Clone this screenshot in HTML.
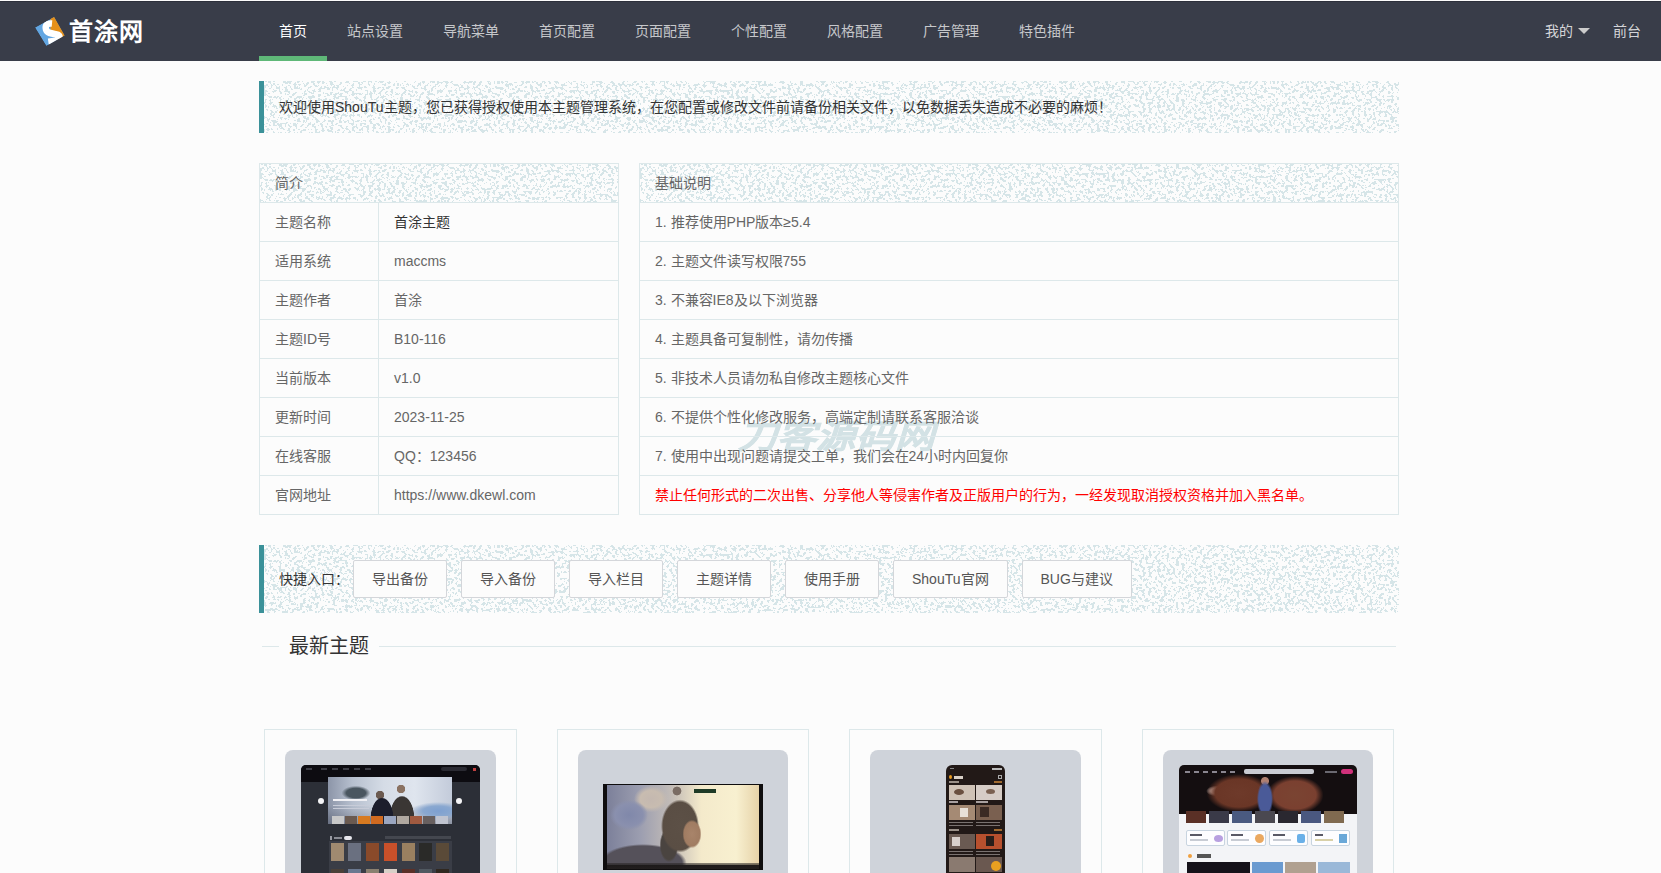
<!DOCTYPE html>
<html lang="zh-CN">
<head>
<meta charset="utf-8">
<title>首涂主题管理</title>
<style>
*{margin:0;padding:0;box-sizing:border-box;}
html,body{width:1661px;height:873px;overflow:hidden;}
body{background:#fcfcfc;font-family:"Liberation Sans",sans-serif;font-size:14px;color:#666;position:relative;}
.abs{position:absolute;}
/* header */
.hd{position:absolute;left:0;top:1px;width:1661px;height:60px;background:#393d49;border-top:1px solid #2d303b;}
.logo{position:absolute;}
.logotxt{position:absolute;left:69px;top:13px;font-family:"Liberation Serif",serif;font-weight:bold;color:#fff;font-size:24px;line-height:34px;letter-spacing:1px;}
.nav{position:absolute;left:259px;top:0;height:60px;white-space:nowrap;font-size:0;}
.nav a{display:inline-block;padding:0 20px;line-height:59px;font-size:14px;color:rgba(255,255,255,.72);text-decoration:none;position:relative;}
.nav a.on{color:#fff;}
.nav a.on:after{content:"";position:absolute;left:0;right:0;bottom:0;height:5px;background:#5fb878;}
.rnav{position:absolute;top:0;height:59px;line-height:59px;font-size:14px;color:rgba(255,255,255,.8);}
.caret{position:absolute;width:0;height:0;border-left:6px solid transparent;border-right:6px solid transparent;border-top:6px solid #ccc;}
/* noise */
.noise{background-color:transparent;}
.nz{position:absolute;left:0;top:0;width:100%;height:100%;z-index:-1;}
.rel{position:relative;z-index:0;}
.quote{position:absolute;left:259px;width:1140px;border-left:5px solid #3b9199;line-height:22px;padding:15px;color:#333;}
table{border-collapse:collapse;position:absolute;top:163px;}
td,th{border:1px solid #dde8ea;padding:9px 15px;line-height:20px;font-weight:normal;text-align:left;color:#666;height:39px;}
th{}
.btn{display:inline-block;vertical-align:top;height:38px;line-height:36px;padding:0 18px;border:1px solid #d4d6da;background:#fcfcfc;color:#555;border-radius:2px;margin-left:14px;font-size:14px;}
.btn.first{margin-left:4px;}
.field{position:absolute;left:262px;top:646px;width:1134px;height:1px;background:#dde8ea;}
.legend{position:absolute;left:279px;top:631px;padding:0 10px;background:#fcfcfc;font-size:20px;line-height:30px;color:#333;font-weight:300;}
.cards{position:absolute;left:244px;top:724px;width:1170px;display:flex;}
.col{width:292.5px;padding:0 15px;}
.card{margin:5px;border:1px solid #dde8ea;padding:20px;height:200px;background:#fcfcfc;}
.gbox{background:#cfd3da;border-radius:8px;height:180px;position:relative;overflow:hidden;}
.wm{position:absolute;left:738px;top:413px;font-size:40px;line-height:48px;font-weight:900;font-style:italic;color:#d3e2e5;-webkit-text-stroke:0.6px #d3e2e5;letter-spacing:0px;white-space:nowrap;transform:scale(0.98,0.82);transform-origin:0 50%;z-index:-1;}

.g{position:absolute;}
/* card1 */
.c1s{left:16px;top:15px;width:179px;height:130px;background:#2c2f37;border-radius:5px 5px 0 0;}
.c1t{left:0;top:0;width:179px;height:17px;background:#0d0c11;border-radius:5px 5px 0 0;}
.c1b{left:27px;top:12px;width:124px;height:47px;overflow:hidden;background:
 radial-gradient(ellipse 13px 24px at 54px 42px,#1c1e2c 0,#1c1e2c 85%,transparent 90%),
 radial-gradient(circle 5px at 52px 18px,#6b5a50 0,#6b5a50 80%,transparent 90%),
 radial-gradient(ellipse 14px 26px at 74px 42px,#3a3634 0,#3a3634 85%,transparent 90%),
 radial-gradient(circle 5px at 73px 12px,#8a7262 0,#8a7262 80%,transparent 90%),
 radial-gradient(ellipse 16px 8px at 28px 16px,#4a5660 0,#4a5660 60%,transparent 90%),
 radial-gradient(ellipse 30px 10px at 110px 34px,#7ea0d0 0,#8aa8d0 50%,transparent 90%),
 linear-gradient(180deg,transparent 0,transparent 60%,rgba(40,44,60,.35) 100%),
 linear-gradient(90deg,#8c95a8 0%,#b7c0cf 20%,#d5dce6 45%,#dfe5ee 70%,#c3cbda 100%);}
.c1th{top:39px;height:8px;width:12px;}
.c1d{width:6px;height:6px;border-radius:50%;background:#f4f4f6;top:33px;}
.c1g{left:28px;top:76px;width:123px;height:60px;background:#3a3d46;}
.c1p{top:2px;width:13px;height:18px;}
/* card2 */
.c2v{left:25px;top:34px;width:160px;height:86px;background:#0f0d0e;}
.c2i{left:4px;top:1px;width:152px;height:80px;overflow:hidden;background:
 radial-gradient(ellipse 10px 15px at 85px 49px,#a8846a 0,#a07c62 80%,transparent 95%),
 radial-gradient(ellipse 20px 28px at 73px 41px,#5c5046 0,#5a4e44 85%,transparent 95%),radial-gradient(ellipse 10px 18px at 62px 60px,#4a4440 0,#4a4440 80%,transparent 95%),
 radial-gradient(circle 5px at 70px 6px,#7a6c64 0,#7a6c64 80%,transparent 95%),
 radial-gradient(ellipse 46px 20px at 36px 78px,#55515a 0,#55515a 85%,transparent 95%),
 radial-gradient(ellipse 20px 16px at 22px 30px,#8088aa 0,#8a90ae 70%,transparent 95%),
 radial-gradient(ellipse 18px 14px at 44px 14px,#c4b8b0 0,#c8bcb0 60%,transparent 95%),
 linear-gradient(90deg,#7c809a 0%,#9c9eb0 22%,#c8c0b8 45%,#f4eacb 62%,#f8f0d0 85%,#e6d2a8 100%);}
.c2c{left:4px;top:79px;width:152px;height:6px;background:linear-gradient(180deg,rgba(40,36,36,.5),#221e1e);}
.c2t{left:91px;top:5px;width:22px;height:4px;background:#1e3a26;}
/* card3 */
.c3p{left:76px;top:15px;width:59px;height:130px;background:#221917;border-radius:6px 6px 0 0;}
.c3t{width:26px;height:15px;}
/* card4 */
.c4w{left:16px;top:15px;width:178px;height:130px;background:#f3f4f7;border-radius:5px 5px 0 0;overflow:hidden;}
.c4b{left:0;top:0;width:178px;height:49px;background:
 radial-gradient(ellipse 9px 20px at 86px 34px,#4a5a98 0,#4a5a98 70%,transparent 90%),
 radial-gradient(circle 5px at 86px 16px,#b08070 0,#b08070 70%,transparent 90%),
 radial-gradient(ellipse 34px 20px at 60px 28px,#6e3a2a 0,#6a3626 70%,transparent 95%),
 radial-gradient(ellipse 30px 20px at 116px 30px,#7a4432 0,#7a4030 70%,transparent 95%),
 radial-gradient(ellipse 12px 6px at 38px 26px,#d8c8c0 0,#c8b0a8 50%,transparent 90%),
 #140e10;}
.c4s{left:65px;top:4px;width:70px;height:5px;background:#c9cbd2;border-radius:2px;}
.c4k{left:162px;top:4px;width:12px;height:5px;background:#d0307a;border-radius:3px;}
.c4th{top:46px;width:20px;height:12px;}
.c4i{top:65px;width:39px;height:16px;background:#fdfdff;border:1px solid #c8d4e0;border-radius:2px;}
.c4q{top:97px;height:13px;}
</style>
</head>
<body>
<svg width="0" height="0" style="position:absolute;left:0;top:0">
<filter id="nz" x="0" y="0" width="100%" height="100%" color-interpolation-filters="sRGB">
<feTurbulence type="fractalNoise" baseFrequency="0.33" numOctaves="2" seed="7"/>
<feColorMatrix type="matrix" values="0 0 0 0 0.839  0 0 0 0 0.898  0 0 0 0 0.910  2 0 0 0 -0.61"/>
<feComponentTransfer><feFuncA type="discrete" tableValues="0 1"/></feComponentTransfer>
</filter>
</svg>
<div class="hd">
  <svg class="logo" viewBox="30 11 40 38" style="left:30px;top:10px;width:40px;height:38px;">
    <clipPath id="lc"><polygon points="35,26.4 54.1,15.9 64.6,34.5 46.3,45"/></clipPath>
    <g clip-path="url(#lc)">
    <polygon points="35,26.4 54.1,15.9 64.6,34.5 46.3,45" fill="#62a6e2"/>
    <polygon points="50.5,16 56,14 66,34.5 58.5,38 57,33.5 50.5,29" fill="#e5901a"/>
    <path d="M52,22.5 C46.5,22 45,24.5 46,28.5 C47,32 51,32.5 56,33.2 C61,34 60.5,38.5 55.5,39.6 L48.3,40.6" stroke="#fff" stroke-width="6.5" fill="none" stroke-linecap="butt"/>
    </g>
  </svg>
  <div class="logotxt">首涂网</div>
  <div class="nav">
    <a class="on">首页</a><a>站点设置</a><a>导航菜单</a><a>首页配置</a><a>页面配置</a><a>个性配置</a><a>风格配置</a><a>广告管理</a><a>特色插件</a>
  </div>
  <div class="rnav" style="left:1545px;">我的</div>
  <div class="caret" style="left:1578px;top:26px;"></div>
  <div class="rnav" style="left:1613px;">前台</div>
</div>

<div class="quote noise" style="top:81px;height:52px;z-index:0;"><svg class="nz" preserveAspectRatio="none"><rect width="100%" height="100%" filter="url(#nz)"/></svg>欢迎使用ShouTu主题，您已获得授权使用本主题管理系统，在您配置或修改文件前请备份相关文件，以免数据丢失造成不必要的麻烦！</div>

<table style="left:259px;width:360px;">
  <tr><th colspan="2" class="noise" style="position:relative;z-index:0;"><svg class="nz" preserveAspectRatio="none"><rect width="100%" height="100%" filter="url(#nz)"/></svg>简介</th></tr>
  <tr><td style="width:119px;">主题名称</td><td style="color:#333;">首涂主题</td></tr>
  <tr><td>适用系统</td><td>maccms</td></tr>
  <tr><td>主题作者</td><td>首涂</td></tr>
  <tr><td>主题ID号</td><td>B10-116</td></tr>
  <tr><td>当前版本</td><td>v1.0</td></tr>
  <tr><td>更新时间</td><td>2023-11-25</td></tr>
  <tr><td>在线客服</td><td>QQ：123456</td></tr>
  <tr><td>官网地址</td><td>https://www.dkewl.com</td></tr>
</table>

<table style="left:639px;width:760px;">
  <tr><th class="noise" style="position:relative;z-index:0;"><svg class="nz" preserveAspectRatio="none"><rect width="100%" height="100%" filter="url(#nz)"/></svg>基础说明</th></tr>
  <tr><td>1. 推荐使用PHP版本≥5.4</td></tr>
  <tr><td>2. 主题文件读写权限755</td></tr>
  <tr><td>3. 不兼容IE8及以下浏览器</td></tr>
  <tr><td>4. 主题具备可复制性，请勿传播</td></tr>
  <tr><td>5. 非技术人员请勿私自修改主题核心文件</td></tr>
  <tr><td>6. 不提供个性化修改服务，高端定制请联系客服洽谈</td></tr>
  <tr><td>7. 使用中出现问题请提交工单，我们会在24小时内回复你</td></tr>
  <tr><td style="color:#f00;">禁止任何形式的二次出售、分享他人等侵害作者及正版用户的行为，一经发现取消授权资格并加入黑名单。</td></tr>
</table>

<div class="wm">刀客源码网</div>

<div class="quote noise" style="top:545px;height:68px;padding:15px 15px;white-space:nowrap;font-size:0;z-index:0;"><svg class="nz" preserveAspectRatio="none"><rect width="100%" height="100%" filter="url(#nz)"/></svg>
  <span style="font-size:14px;vertical-align:top;line-height:38px;color:#333;">快捷入口：</span><span class="btn first">导出备份</span><span class="btn">导入备份</span><span class="btn">导入栏目</span><span class="btn">主题详情</span><span class="btn">使用手册</span><span class="btn">ShouTu官网</span><span class="btn">BUG与建议</span>
</div>

<div class="field"></div>
<div class="legend">最新主题</div>

<div class="cards">
  <div class="col"><div class="card"><div class="gbox" id="g1"><div class="g c1s">
<div class="g c1t"></div>
<div class="g c1b">
 <div class="g" style="left:5px;top:22px;width:34px;height:2px;background:#f0f0f4;"></div><div class="g" style="left:5px;top:28px;width:40px;height:1px;background:#c8ccd8;"></div><div class="g" style="left:5px;top:31px;width:36px;height:1px;background:#c8ccd8;"></div>
 <div class="g c1th" style="left:4px;background:#c8c8c8;"></div><div class="g c1th" style="left:17px;background:#6a5a50;"></div><div class="g c1th" style="left:30px;background:#d77a20;"></div><div class="g c1th" style="left:43px;background:#d06a20;"></div><div class="g c1th" style="left:56px;background:#9aa6c0;"></div><div class="g c1th" style="left:69px;background:#b0a8a0;"></div><div class="g c1th" style="left:82px;background:#a05a40;"></div><div class="g c1th" style="left:95px;background:#686060;"></div><div class="g c1th" style="left:108px;background:#c0c4d0;"></div>
</div>
<div class="g c1d" style="left:17px;"></div><div class="g c1d" style="left:155px;"></div>
<div class="g" style="left:29px;top:71px;width:2px;height:4px;background:#9a9ca4;"></div><div class="g" style="left:33px;top:72px;width:8px;height:2px;background:#8a8c94;"></div><div class="g" style="left:43px;top:71px;width:8px;height:4px;border-radius:2px;background:#e8e8ee;"></div>
<div class="g" style="left:84px;top:71px;width:66px;height:3px;background:#44474f;"></div>
<div class="g" style="left:5px;top:3px;width:6px;height:2px;background:#3e3e46;"></div><div class="g" style="left:20px;top:3px;width:50px;height:2px;background:repeating-linear-gradient(90deg,#3e3e46 0 6px,transparent 6px 11px);"></div>
<div class="g" style="left:140px;top:2px;width:26px;height:4px;border-radius:2px;background:#2a2a32;"></div><div class="g" style="left:172px;top:3px;width:3px;height:3px;background:#c04040;"></div>
<div class="g c1g">
 <div class="g c1p" style="left:2px;background:#a08a70;"></div><div class="g c1p" style="left:19px;background:#6a7080;"></div><div class="g c1p" style="left:37px;background:#8a4a2a;"></div><div class="g c1p" style="left:55px;background:#c8502a;"></div><div class="g c1p" style="left:73px;background:#9a8060;"></div><div class="g c1p" style="left:90px;background:#2a2a28;"></div><div class="g c1p" style="left:107px;background:#5a4a38;"></div>
 <div class="g c1p" style="left:2px;top:28px;background:#4a4038;"></div><div class="g c1p" style="left:19px;top:28px;background:#6a7890;"></div><div class="g c1p" style="left:37px;top:28px;background:#8a8070;"></div><div class="g c1p" style="left:55px;top:28px;background:#d8d0c8;"></div><div class="g c1p" style="left:73px;top:28px;background:#5a3028;"></div><div class="g c1p" style="left:90px;top:28px;background:#505860;"></div><div class="g c1p" style="left:107px;top:28px;background:#302820;"></div>
</div>
</div></div></div></div>
  <div class="col"><div class="card"><div class="gbox" id="g2"><div class="g c2v"><div class="g c2i"></div><div class="g c2c"></div><div class="g c2t"></div></div></div></div></div>
  <div class="col"><div class="card"><div class="gbox" id="g3"><div class="g c3p">
 <div class="g c3t" style="left:3px;top:20px;background:#cfc2b6;"></div><div class="g c3t" style="left:30px;top:20px;background:#d6ccc6;"></div>
 <div class="g c3t" style="left:3px;top:40px;background:#a58a74;"></div><div class="g c3t" style="left:30px;top:40px;background:#7a6050;"></div>
 <div class="g c3t" style="left:3px;top:69px;background:#6a5a52;"></div><div class="g c3t" style="left:30px;top:69px;background:#b8502e;"></div>
 <div class="g c3t" style="left:3px;top:92px;background:#8a7a70;"></div><div class="g c3t" style="left:30px;top:92px;background:#6a5850;"></div>
 <div class="g" style="left:45px;top:96px;width:10px;height:10px;border-radius:50%;background:#e8a020;"></div>
 <div class="g" style="left:3px;top:10px;width:3px;height:4px;border-radius:50%;background:#e89a20;"></div><div class="g" style="left:8px;top:11px;width:9px;height:3px;background:#d8d0c8;"></div><div class="g" style="left:52px;top:10px;width:4px;height:4px;border:1px solid #aaa;"></div>
 <div class="g" style="left:4px;top:3px;width:4px;height:1px;background:#888;"></div><div class="g" style="left:46px;top:3px;width:10px;height:2px;background:#bbb;"></div>
 <div class="g" style="left:3px;top:16px;width:10px;height:2px;background:#9a9088;"></div><div class="g" style="left:48px;top:16px;width:8px;height:2px;background:#a06a30;"></div>
 <div class="g" style="left:3px;top:36px;width:9px;height:2px;background:#a8a0a0;"></div><div class="g" style="left:30px;top:36px;width:12px;height:2px;background:#a8a0a0;"></div>
 <div class="g" style="left:3px;top:57px;width:24px;height:4px;background:repeating-linear-gradient(180deg,#7a7270 0 1px,transparent 1px 3px);"></div><div class="g" style="left:30px;top:57px;width:24px;height:4px;background:repeating-linear-gradient(180deg,#7a7270 0 1px,transparent 1px 3px);"></div>
 <div class="g" style="left:3px;top:64px;width:10px;height:2px;background:#9a9088;"></div><div class="g" style="left:48px;top:64px;width:8px;height:2px;background:#a06a30;"></div>
 <div class="g" style="left:3px;top:86px;width:24px;height:4px;background:repeating-linear-gradient(180deg,#7a7270 0 1px,transparent 1px 3px);"></div><div class="g" style="left:30px;top:86px;width:24px;height:4px;background:repeating-linear-gradient(180deg,#7a7270 0 1px,transparent 1px 3px);"></div>
 <div class="g" style="left:8px;top:24px;width:10px;height:6px;border-radius:50%;background:#6a5040;"></div><div class="g" style="left:40px;top:24px;width:9px;height:5px;border-radius:50%;background:#7a6050;"></div>
 <div class="g" style="left:14px;top:43px;width:8px;height:9px;background:#e8e0d8;"></div><div class="g" style="left:34px;top:42px;width:9px;height:10px;background:#3a2a24;"></div>
 <div class="g" style="left:6px;top:72px;width:8px;height:9px;background:#d8d0cc;"></div><div class="g" style="left:40px;top:71px;width:8px;height:10px;background:#2a1e1a;"></div>
</div></div></div></div>
  <div class="col"><div class="card"><div class="gbox" id="g4"><div class="g c4w">
 <div class="g c4b"></div>
 <div class="g c4s"></div><div class="g c4k"></div>
 <div class="g c4th" style="left:7px;background:#5a3026;"></div><div class="g c4th" style="left:30px;background:#3a3a48;"></div><div class="g c4th" style="left:53px;background:#4a5a80;"></div><div class="g c4th" style="left:76px;background:#4a4850;"></div><div class="g c4th" style="left:99px;background:#2a2830;"></div><div class="g c4th" style="left:122px;background:#4a5880;"></div><div class="g c4th" style="left:145px;background:#806a50;"></div>
 <div class="g c4i" style="left:7px;"><div class="g" style="left:3px;top:3px;width:12px;height:2px;background:#5a5a66;"></div><div class="g" style="left:3px;top:8px;width:18px;height:2px;background:#c8ccd4;"></div><div class="g" style="left:27px;top:4px;width:9px;height:7px;border-radius:50%;background:#b8a0e0;"></div></div>
 <div class="g c4i" style="left:48px;"><div class="g" style="left:3px;top:3px;width:12px;height:2px;background:#5a5a66;"></div><div class="g" style="left:3px;top:8px;width:18px;height:2px;background:#c8ccd4;"></div><div class="g" style="left:27px;top:3px;width:9px;height:9px;border-radius:50%;background:#eaa860;"></div></div>
 <div class="g c4i" style="left:90px;"><div class="g" style="left:3px;top:3px;width:12px;height:2px;background:#5a5a66;"></div><div class="g" style="left:3px;top:8px;width:18px;height:2px;background:#c8ccd4;"></div><div class="g" style="left:27px;top:3px;width:8px;height:9px;border-radius:2px;background:#6ab0e8;"></div></div>
 <div class="g c4i" style="left:132px;"><div class="g" style="left:3px;top:3px;width:8px;height:2px;background:#5a5a66;"></div><div class="g" style="left:3px;top:8px;width:18px;height:2px;background:#d8d0a8;"></div><div class="g" style="left:27px;top:3px;width:8px;height:9px;background:#6aa8d8;"></div></div>
 <div class="g" style="left:6px;top:6px;width:54px;height:2px;background:repeating-linear-gradient(90deg,#8a8690 0 5px,transparent 5px 9px);"></div><div class="g" style="left:146px;top:6px;width:12px;height:2px;background:#6a6870;"></div>
 <div class="g" style="left:18px;top:89px;width:14px;height:4px;background:#555;"></div>
 <div class="g" style="left:9px;top:89px;width:4px;height:4px;border-radius:50%;background:#f0a040;"></div>
 <div class="g c4q" style="left:8px;width:63px;background:#15121a;"></div><div class="g c4q" style="left:73px;width:31px;background:#6a9ad0;"></div><div class="g c4q" style="left:106px;width:31px;background:#b0a090;"></div><div class="g c4q" style="left:139px;width:32px;background:#9ab8d8;"></div>
</div></div></div></div>
</div>
</body>
</html>
